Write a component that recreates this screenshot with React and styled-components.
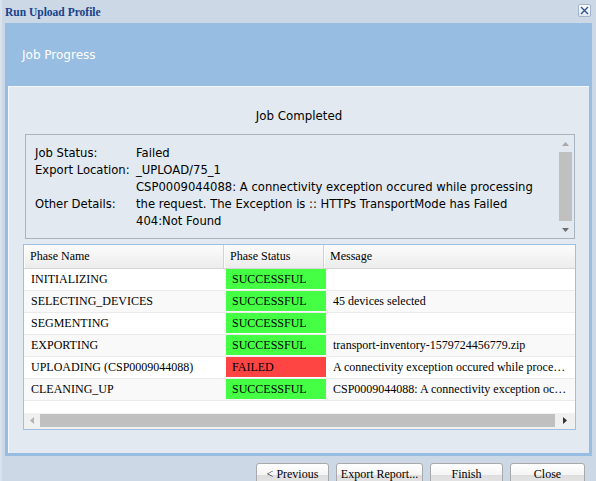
import React from 'react';
import styled, { createGlobalStyle } from 'styled-components';

const GlobalStyle = createGlobalStyle`
  html, body {
    margin: 0;
    padding: 0;
    background: #ccd8e6;
    overflow: hidden;
  }
`;

const phases = [
  { name: 'INITIALIZING', status: 'SUCCESSFUL', message: '' },
  { name: 'SELECTING_DEVICES', status: 'SUCCESSFUL', message: '45 devices selected' },
  { name: 'SEGMENTING', status: 'SUCCESSFUL', message: '' },
  { name: 'EXPORTING', status: 'SUCCESSFUL', message: 'transport-inventory-1579724456779.zip' },
  {
    name: 'UPLOADING (CSP0009044088)',
    status: 'FAILED',
    message: 'A connectivity exception occured while processing the request.',
  },
  {
    name: 'CLEANING_UP',
    status: 'SUCCESSFUL',
    message: 'CSP0009044088: A connectivity exception occured while processing the request.',
  },
];

const buttons = [
  { label: '< Previous', width: 73 },
  { label: 'Export Report...', width: 87 },
  { label: 'Finish', width: 73 },
  { label: 'Close', width: 75 },
];

const Arrow = ({ dir, color }) => {
  const points = {
    up: '0,4 3.5,0 7,4',
    down: '0,0 3.5,4 7,0',
    left: '4,0 0,3.5 4,7',
    right: '0,0 4,3.5 0,7',
  }[dir];
  const vertical = dir === 'up' || dir === 'down';
  return (
    <svg width={vertical ? 7 : 4} height={vertical ? 4 : 7} viewBox={vertical ? '0 0 7 4' : '0 0 4 7'}>
      <polygon points={points} fill={color} />
    </svg>
  );
};

const App = () => {
  return (
    <Window>
      <GlobalStyle />
      <TitleBar>
        <Title>Run Upload Profile</Title>
        <CloseButton aria-label="close">
          <svg width="9" height="9" viewBox="0 0 9 9">
            <path d="M1 1 L8 8 M8 1 L1 8" stroke="#2b4d8c" strokeWidth="1.3" />
          </svg>
        </CloseButton>
      </TitleBar>

      <Frame>
        <Banner>Job Progress</Banner>
        <Panel>
          <Heading>Job Completed</Heading>

          <DetailsBox>
            <DetailsGrid>
              <Label>Job Status:</Label>
              <Value>Failed</Value>
              <Label>Export Location:</Label>
              <Value>_UPLOAD/75_1</Value>
              <Label>Other Details:</Label>
              <Value>
                <Line>CSP0009044088: A connectivity exception occured while processing</Line>
                <Line>the request. The Exception is :: HTTPs TransportMode has Failed</Line>
                <Line>404:Not Found</Line>
              </Value>
            </DetailsGrid>
            <VScroll>
              <ArrowBox>
                <Arrow dir="up" color="#a8a8a8" />
              </ArrowBox>
              <VThumb />
              <ArrowBox>
                <Arrow dir="down" color="#6e6e6e" />
              </ArrowBox>
            </VScroll>
          </DetailsBox>

          <PhaseGrid>
            <HeaderRow>
              <HeaderCell width={200}>Phase Name</HeaderCell>
              <HeaderCell width={100}>Phase Status</HeaderCell>
              <HeaderCell width={251} last>Message</HeaderCell>
            </HeaderRow>
            {phases.map((p, i) => (
              <Row key={p.name} alt={i % 2 === 1}>
                <NameCell>{p.name}</NameCell>
                <StatusCell>
                  <StatusBadge failed={p.status === 'FAILED'}>{p.status}</StatusBadge>
                </StatusCell>
                <MessageCell>{p.message}</MessageCell>
              </Row>
            ))}
            <GridFiller />
            <HScroll>
              <ArrowBox horizontal size={16}>
                <Arrow dir="left" color="#b4b4b4" />
              </ArrowBox>
              <HThumb />
              <ArrowBox horizontal size={20}>
                <Arrow dir="right" color="#333333" />
              </ArrowBox>
            </HScroll>
          </PhaseGrid>
        </Panel>
      </Frame>

      <ButtonBar>
        {buttons.map((b) => (
          <DialogButton key={b.label} width={b.width}>
            {b.label}
          </DialogButton>
        ))}
      </ButtonBar>
    </Window>
  );
};

const Window = styled.div`
  width: 596px;
  height: 481px;
  box-sizing: border-box;
  border-left: 2px solid #d9e2ed;
  display: flex;
  flex-direction: column;
  overflow: hidden;
`;

const TitleBar = styled.div`
  height: 23px;
  flex-shrink: 0;
  display: flex;
  align-items: flex-start;
  justify-content: space-between;
  padding: 0 5px 0 3px;
`;

const Title = styled.div`
  font-family: 'Liberation Serif', 'Times New Roman', serif;
  font-weight: bold;
  font-size: 11.5px;
  color: #15428b;
  line-height: 12px;
  margin-top: 6px;
`;

const CloseButton = styled.button`
  width: 13px;
  height: 13px;
  margin-top: 4px;
  padding: 0;
  border: 1px solid #a3b4cf;
  border-radius: 2px;
  background: linear-gradient(#ffffff, #dfe8f4);
  display: flex;
  align-items: center;
  justify-content: center;
  cursor: pointer;
`;

const Frame = styled.div`
  margin: 0 4px 0 3px;
  background: #97bde2;
  padding: 0 3px 3px 3px;
  height: 433px;
  flex-shrink: 0;
  box-sizing: border-box;
  display: flex;
  flex-direction: column;
`;

const Banner = styled.div`
  height: 63px;
  flex-shrink: 0;
  display: flex;
  align-items: center;
  padding-left: 14px;
  font-family: 'DejaVu Sans', Verdana, sans-serif;
  font-size: 12px;
  color: #ffffff;
`;

const Panel = styled.div`
  flex: 1;
  background: #e2e9f1;
  border-top: 1px solid #f4f7fb;
  border-left: 1px solid #f4f7fb;
  display: flex;
  flex-direction: column;
`;

const Heading = styled.div`
  margin-top: 21px;
  height: 17px;
  line-height: 17px;
  text-align: center;
  font-family: 'DejaVu Sans', Verdana, sans-serif;
  font-size: 11.8px;
  color: #000;
`;

const DetailsBox = styled.div`
  margin: 9px 14px 0 16px;
  height: 105px;
  flex-shrink: 0;
  box-sizing: border-box;
  border: 1px solid #aab4bf;
  display: flex;
`;

const DetailsGrid = styled.div`
  flex: 1;
  display: grid;
  grid-template-columns: 101px 1fr;
  align-items: center;
  align-content: start;
  padding: 10px 0 0 9px;
  font-family: 'DejaVu Sans', Verdana, sans-serif;
  font-size: 11.6px;
  line-height: 17px;
  color: #000;
`;

const Label = styled.div`
  white-space: nowrap;
`;

const Value = styled.div`
  white-space: nowrap;
`;

const Line = styled.div``;

const VScroll = styled.div`
  width: 15px;
  margin-right: 1px;
  display: flex;
  flex-direction: column;
  align-items: center;
`;

const ArrowBox = styled.div`
  width: ${(p) => (p.horizontal ? `${p.size}px` : '15px')};
  height: ${(p) => (p.horizontal ? '15px' : '17px')};
  flex-shrink: 0;
  display: flex;
  align-items: center;
  justify-content: center;
`;

const VThumb = styled.div`
  flex: 1;
  width: 13px;
  background: #c0c0c0;
`;

const PhaseGrid = styled.div`
  margin: 5px 13px 0 14px;
  height: 186px;
  flex-shrink: 0;
  box-sizing: border-box;
  border: 1px solid #9dbfe2;
  background: #ffffff;
  display: flex;
  flex-direction: column;
  overflow: hidden;
`;

const HeaderRow = styled.div`
  display: flex;
  height: 24px;
  flex-shrink: 0;
  box-sizing: border-box;
  border-bottom: 1px solid #d6d6d6;
  background: linear-gradient(#fcfcfc, #ececec);
`;

const HeaderCell = styled.div`
  width: ${(p) => p.width}px;
  flex-shrink: 0;
  box-sizing: border-box;
  border-right: ${(p) => (p.last ? 'none' : '1px solid #d2d2d2')};
  box-shadow: inset 1px 0 0 #ffffff;
  padding-left: 6px;
  display: flex;
  align-items: center;
  font-family: 'Liberation Serif', 'Times New Roman', serif;
  font-size: 12px;
  color: #000;
`;

const Row = styled.div`
  display: grid;
  grid-template-columns: 200px 102px 247px;
  height: 22px;
  flex-shrink: 0;
  box-sizing: border-box;
  border-bottom: 1px solid #ebebeb;
  background: ${(p) => (p.alt ? '#f9f9f9' : '#ffffff')};
  font-family: 'Liberation Serif', 'Times New Roman', serif;
  font-size: 12px;
  color: #000;
`;

const NameCell = styled.div`
  padding-left: 7px;
  display: flex;
  align-items: center;
  white-space: nowrap;
  overflow: hidden;
`;

const StatusCell = styled.div`
  padding-left: 2px;
`;

const StatusBadge = styled.div`
  height: 20px;
  background: ${(p) => (p.failed ? '#ff4444' : '#44ff44')};
  padding-left: 6px;
  display: flex;
  align-items: center;
`;

const MessageCell = styled.div`
  padding: 0 4px 0 7px;
  line-height: 21px;
  white-space: nowrap;
  overflow: hidden;
  text-overflow: ellipsis;
`;

const GridFiller = styled.div`
  flex: 1;
`;

const HScroll = styled.div`
  height: 15px;
  flex-shrink: 0;
  background: #f0f0f0;
  display: flex;
  align-items: center;
  padding: 0 0 1px 0;
`;

const HThumb = styled.div`
  flex: 1;
  height: 13px;
  background: #c0c0c0;
`;

const ButtonBar = styled.div`
  display: flex;
  flex-shrink: 0;
  justify-content: flex-end;
  gap: 7px;
  margin-top: 7px;
  padding-right: 11px;
`;

const DialogButton = styled.button`
  width: ${(p) => p.width}px;
  height: 22px;
  padding: 0;
  flex-shrink: 0;
  border: 1px solid #a9a9a9;
  border-radius: 3px 3px 0 0;
  background: linear-gradient(#ffffff 0%, #f4f4f4 55%, #dedede 56%, #e4e4e4 100%);
  font-family: 'Liberation Serif', 'Times New Roman', serif;
  font-size: 12px;
  color: #000;
  line-height: 20px;
  cursor: pointer;
`;

export default App;
